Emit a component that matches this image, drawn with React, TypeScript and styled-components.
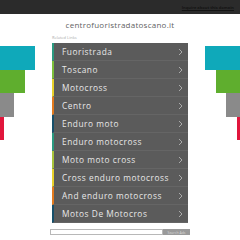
import { ReactElement } from "react";
import styled, { createGlobalStyle } from "styled-components";

const Global = createGlobalStyle`
  html, body {
    margin: 0;
    padding: 0;
    background: #ffffff;
    font-family: "Open Sans", "Liberation Sans", sans-serif;
  }
`;

const Page = styled.div`
  width: 240px;
  height: 240px;
  overflow: hidden;
  display: flex;
  flex-direction: column;
`;

const TopBar = styled.div`
  height: 14px;
  background: #2b2b2b;
  display: flex;
  align-items: center;
  justify-content: flex-end;
  padding-right: 6px;
`;

const TopLink = styled.a`
  font-size: 4px;
  color: #141414;
  text-decoration: underline;
  font-weight: 700;
`;

const Main = styled.div`
  display: grid;
  grid-template-columns: 52px 136px 52px;
`;

const Side = styled.div<{ $right?: boolean }>`
  padding-top: 32px;
  display: flex;
  flex-direction: column;
  align-items: ${(p) => (p.$right ? "flex-end" : "flex-start")};
`;

const Bar = styled.div<{ $w: number; $c: string }>`
  width: ${(p) => p.$w}px;
  height: 23.5px;
  background: ${(p) => p.$c};
`;

const Center = styled.div`
  display: flex;
  flex-direction: column;
`;

const Title = styled.div`
  margin-top: 6px;
  text-align: center;
  font-size: 8px;
  line-height: 10px;
  color: #5f5f5f;
  letter-spacing: 0.25px;
  white-space: nowrap;
`;

const Related = styled.div`
  margin: 5px 0 3px;
  font-size: 4px;
  line-height: 5px;
  color: #ababab;
  height: 5px;
`;

const List = styled.div`
  display: flex;
  flex-direction: column;
`;

const Row = styled.a<{ $c: string }>`
  height: 18px;
  box-sizing: border-box;
  background: #5b5b5b;
  border-left: 2px solid ${(p) => p.$c};
  border-bottom: 1px solid #656565;
  display: flex;
  align-items: center;
  justify-content: space-between;
  padding: 0 5px 0 8px;
  color: #e8e8e8;
  font-size: 8.3px;
  letter-spacing: 0.55px;
  text-decoration: none;
  white-space: nowrap;
`;

const Search = styled.form`
  margin: 6px -2px 0 -2px;
  display: flex;
  height: 6px;
`;

const SearchInput = styled.div`
  flex: 1;
  box-sizing: border-box;
  border: 1px solid #b8b8b8;
  background: #fff;
`;

const SearchButton = styled.div`
  width: 27px;
  background: #9a9a9a;
  color: #d8d8d8;
  font-size: 3.5px;
  display: flex;
  align-items: center;
  justify-content: center;
`;

const Chevron = () => (
  <svg width="5" height="8" viewBox="0 0 5 8">
    <polyline points="1,1 4,4 1,7" fill="none" stroke="#cfcfcf" strokeWidth="0.7" />
  </svg>
);

const links: [string, string][] = [
  ["Fuoristrada", "#2a9a80"],
  ["Toscano", "#7cbf3a"],
  ["Motocross", "#e8d12a"],
  ["Centro", "#e37a1e"],
  ["Enduro moto", "#17506b"],
  ["Enduro motocross", "#2a9a80"],
  ["Moto moto cross", "#a8c43a"],
  ["Cross enduro motocross", "#e8d12a"],
  ["And enduro motocross", "#e37a1e"],
  ["Motos De Motocros", "#17506b"],
];

export default function App(): ReactElement {
  return (
    <>
      <Global />
      <Page>
        <TopBar>
          <TopLink>Inquire about this domain</TopLink>
        </TopBar>
        <Main>
          <Side>
            <Bar $w={35} $c="#0fa9ba" />
            <Bar $w={24.5} $c="#5fae2e" />
            <Bar $w={14} $c="#8a8a8a" />
            <Bar $w={4} $c="#e1163c" />
          </Side>
          <Center>
            <Title>centrofuoristradatoscano.it</Title>
            <Related>Related Links</Related>
            <List>
              {links.map(([label, c]) => (
                <Row key={label} $c={c}>
                  <span>{label}</span>
                  <Chevron />
                </Row>
              ))}
            </List>
            <Search>
              <SearchInput />
              <SearchButton>Search Ads</SearchButton>
            </Search>
          </Center>
          <Side $right>
            <Bar $w={35} $c="#0fa9ba" />
            <Bar $w={24} $c="#5fae2e" />
            <Bar $w={14} $c="#8a8a8a" />
            <Bar $w={3} $c="#e1163c" />
          </Side>
        </Main>
      </Page>
    </>
  );
}
